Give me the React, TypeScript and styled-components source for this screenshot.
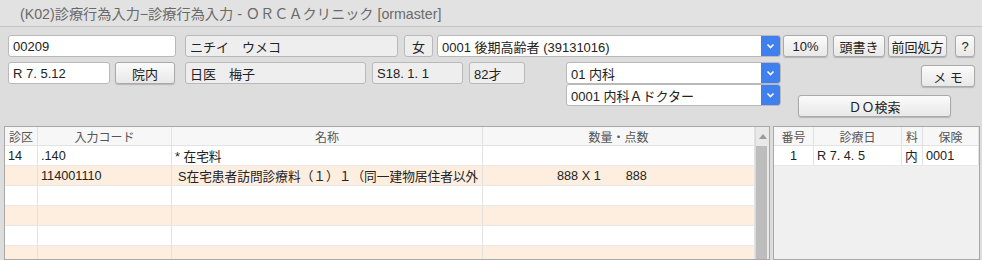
import React from 'react';
import styled, { createGlobalStyle } from 'styled-components';

const GlobalStyle = createGlobalStyle`
  html, body {
    margin: 0;
    padding: 0;
  }
  body {
    background: #dddddd;
    font-family: "Liberation Sans", "Noto Sans CJK JP", sans-serif;
    font-size: 13px;
    color: #222;
    overflow: hidden;
  }
`;

const Window = styled.div`
  width: 982px;
  height: 260px;
  display: flex;
  flex-direction: column;
  overflow: hidden;
`;

const TitleBar = styled.div`
  height: 27px;
  box-sizing: border-box;
  display: flex;
  align-items: center;
  padding-left: 20px;
  background: #e2e2e2;
  border-bottom: 1px solid #c4c4c4;
  color: #6a6a6a;
  font-size: 14.2px;
`;

const Form = styled.div`
  display: flex;
  flex-direction: column;
  gap: 5px;
  padding: 8px 0 0 8px;
`;

const Row = styled.div`
  display: flex;
  align-items: flex-start;
`;

const Field = styled.div<{ $w: number; $gray?: boolean; $ml?: number; $center?: boolean }>`
  width: ${({ $w }) => $w}px;
  height: 22px;
  margin-left: ${({ $ml }) => $ml ?? 0}px;
  box-sizing: border-box;
  display: flex;
  align-items: center;
  justify-content: ${({ $center }) => ($center ? 'center' : 'flex-start')};
  padding: 0 ${({ $center }) => ($center ? 0 : 4)}px;
  border: 1px solid #b9b9b9;
  border-radius: 3px;
  background: ${({ $gray }) => ($gray ? '#eeeeee' : '#ffffff')};
  white-space: pre;
  overflow: hidden;
`;

const Button = styled.div<{ $w: number; $ml?: number; $mt?: number; $self?: string }>`
  width: ${({ $w }) => $w}px;
  height: 22px;
  margin-left: ${({ $ml }) => $ml ?? 0}px;
  margin-top: ${({ $mt }) => $mt ?? 0}px;
  align-self: ${({ $self }) => $self ?? 'auto'};
  box-sizing: border-box;
  display: flex;
  align-items: center;
  justify-content: center;
  border: 1px solid #aaaaaa;
  border-radius: 3px;
  background: linear-gradient(#fbfbfb, #e8e8e8);
  box-shadow: 0 1px 1px rgba(0, 0, 0, 0.18);
  color: #222;
  white-space: pre;
`;

const Combo = styled.div<{ $w: number; $ml?: number }>`
  width: ${({ $w }) => $w}px;
  height: 22px;
  margin-left: ${({ $ml }) => $ml ?? 0}px;
  box-sizing: border-box;
  display: flex;
  border: 1px solid #b9b9b9;
  border-radius: 3px;
  background: #fff;
  overflow: hidden;
`;

const ComboText = styled.div`
  flex: 1;
  display: flex;
  align-items: center;
  padding-left: 4px;
  white-space: pre;
`;

const ComboArrow = styled.div`
  width: 19px;
  display: flex;
  align-items: center;
  justify-content: center;
  background: #3f80ee;
`;

const LeftGroup = styled.div`
  display: flex;
`;

const ComboStack = styled.div`
  display: flex;
  flex-direction: column;
  margin-left: 41px;
`;

const SideButtons = styled.div`
  display: flex;
  flex-direction: column;
  width: 177px;
  margin-left: 17px;
`;

const Panels = styled.div`
  display: flex;
  gap: 3px;
  margin-top: 9px;
  padding-left: 4px;
  flex: 1;
  min-height: 0;
`;

const Panel = styled.div<{ $w: number; $bg: string }>`
  width: ${({ $w }) => $w}px;
  box-sizing: border-box;
  display: flex;
  border: 1px solid #a8a8a8;
  background: ${({ $bg }) => $bg};
  overflow: hidden;
`;

const Grid = styled.div<{ $cols: string }>`
  display: grid;
  grid-template-columns: ${({ $cols }) => $cols};
  grid-auto-rows: 20px;
  grid-template-rows: 19px;
  align-content: start;
`;

const HeadCell = styled.div`
  display: flex;
  align-items: center;
  justify-content: center;
  background: #f7f7f7;
  color: #555;
  font-size: 12px;
  border-right: 1px solid #e2e2e2;
  border-bottom: 1px solid #e2e2e2;
`;

const Cell = styled.div<{ $alt?: boolean; $center?: boolean; $pl?: number }>`
  display: flex;
  align-items: center;
  justify-content: ${({ $center }) => ($center ? 'center' : 'flex-start')};
  padding: 0 3px 0 ${({ $pl }) => $pl ?? 3}px;
  background: ${({ $alt }) => ($alt ? '#fdeee0' : '#ffffff')};
  border-right: 1px solid #e2e2e2;
  border-bottom: 1px solid #e8e8e8;
  font-size: 12.7px;
  white-space: pre;
  overflow: hidden;
`;

const Qty = styled.div`
  display: flex;
  gap: 25px;
  padding-left: 71px;
`;

const ScrollBar = styled.div`
  width: 14px;
  display: flex;
  flex-direction: column;
  background: #e9e9e9;
  border-left: 1px solid #dadada;
`;

const ScrollUp = styled.div`
  height: 19px;
  display: flex;
  align-items: center;
  justify-content: center;
`;

const Thumb = styled.div`
  flex: 1;
  margin: 0 2px 0 0;
  background: #bdbdbd;
`;

const Chevron = () => (
  <svg width="9" height="6" viewBox="0 0 9 6">
    <polyline points="1.5,1.5 4.5,4.5 7.5,1.5" fill="none" stroke="#fff" strokeWidth="1.6" />
  </svg>
);

const ComboBox: React.FC<{ w: number; ml?: number; text: string }> = ({ w, ml, text }) => (
  <Combo $w={w} $ml={ml}>
    <ComboText>{text}</ComboText>
    <ComboArrow>
      <Chevron />
    </ComboArrow>
  </Combo>
);

type Line = { ku: string; code: string; name: string; indent?: number; qty?: [string, string] };

const lines: Line[] = [
  { ku: '14', code: '.140', name: '* 在宅料' },
  { ku: '', code: '114001110', name: 'S在宅患者訪問診療料（１）１（同一建物居住者以外', indent: 6, qty: ['888 X 1', '888'] },
  { ku: '', code: '', name: '' },
  { ku: '', code: '', name: '' },
  { ku: '', code: '', name: '' },
  { ku: '', code: '', name: '' },
];

const App: React.FC = () => {
  return (
    <Window>
      <GlobalStyle />
      <TitleBar>(K02)診療行為入力−診療行為入力 - ＯＲＣＡクリニック [ormaster]</TitleBar>
      <Form>
        <Row>
          <Field $w={168}>00209</Field>
          <Field $w={213} $ml={9} $gray>ニチイ　ウメコ</Field>
          <Field $w={29} $ml={6} $gray $center>女</Field>
          <ComboBox w={344} ml={4} text="0001 後期高齢者 (39131016)" />
          <Button $w={45} $ml={2}>10%</Button>
          <Button $w={52} $ml={5}>頭書き</Button>
          <Button $w={59} $ml={3}>前回処方</Button>
          <Button $w={20} $ml={8}>?</Button>
        </Row>
        <Row>
          <LeftGroup>
            <Field $w={102}>R 7. 5.12</Field>
            <Button $w={60} $ml={5}>院内</Button>
            <Field $w={181} $ml={10} $gray>日医　梅子</Field>
            <Field $w={91} $ml={6} $gray>S18. 1. 1</Field>
            <Field $w={56} $ml={6} $gray>82才</Field>
          </LeftGroup>
          <ComboStack>
            <ComboBox w={215} text="01 内科" />
            <ComboBox w={215} text="0001 内科Ａドクター" />
          </ComboStack>
          <SideButtons>
            <Button $w={54} $mt={3} $self="flex-end">メ モ</Button>
            <Button $w={153} $mt={8}>ＤＯ検索</Button>
          </SideButtons>
        </Row>
      </Form>
      <Panels>
        <Panel $w={766} $bg="#ffffff">
          <Grid $cols="33px 134px 311px 272px">
            <HeadCell>診区</HeadCell>
            <HeadCell>入力コード</HeadCell>
            <HeadCell>名称</HeadCell>
            <HeadCell>数量・点数</HeadCell>
            {lines.map((l, i) => (
              <React.Fragment key={i}>
                <Cell $alt={i % 2 === 1}>{l.ku}</Cell>
                <Cell $alt={i % 2 === 1}>{l.code}</Cell>
                <Cell $alt={i % 2 === 1} $pl={l.indent}>{l.name}</Cell>
                <Cell $alt={i % 2 === 1}>
                  {l.qty && (
                    <Qty>
                      <span>{l.qty[0]}</span>
                      <span>{l.qty[1]}</span>
                    </Qty>
                  )}
                </Cell>
              </React.Fragment>
            ))}
          </Grid>
          <ScrollBar>
            <ScrollUp>
              <svg width="8" height="5" viewBox="0 0 8 5">
                <polygon points="0,5 4,0 8,5" fill="#9a9a9a" />
              </svg>
            </ScrollUp>
            <Thumb />
          </ScrollBar>
        </Panel>
        <Panel $w={207} $bg="#f0f0f0">
          <Grid $cols="40px 88px 21px 56px">
            <HeadCell>番号</HeadCell>
            <HeadCell>診療日</HeadCell>
            <HeadCell>料</HeadCell>
            <HeadCell>保険</HeadCell>
            <Cell $center>1</Cell>
            <Cell>R 7. 4. 5</Cell>
            <Cell>内</Cell>
            <Cell>0001</Cell>
          </Grid>
        </Panel>
      </Panels>
    </Window>
  );
};

export default App;
